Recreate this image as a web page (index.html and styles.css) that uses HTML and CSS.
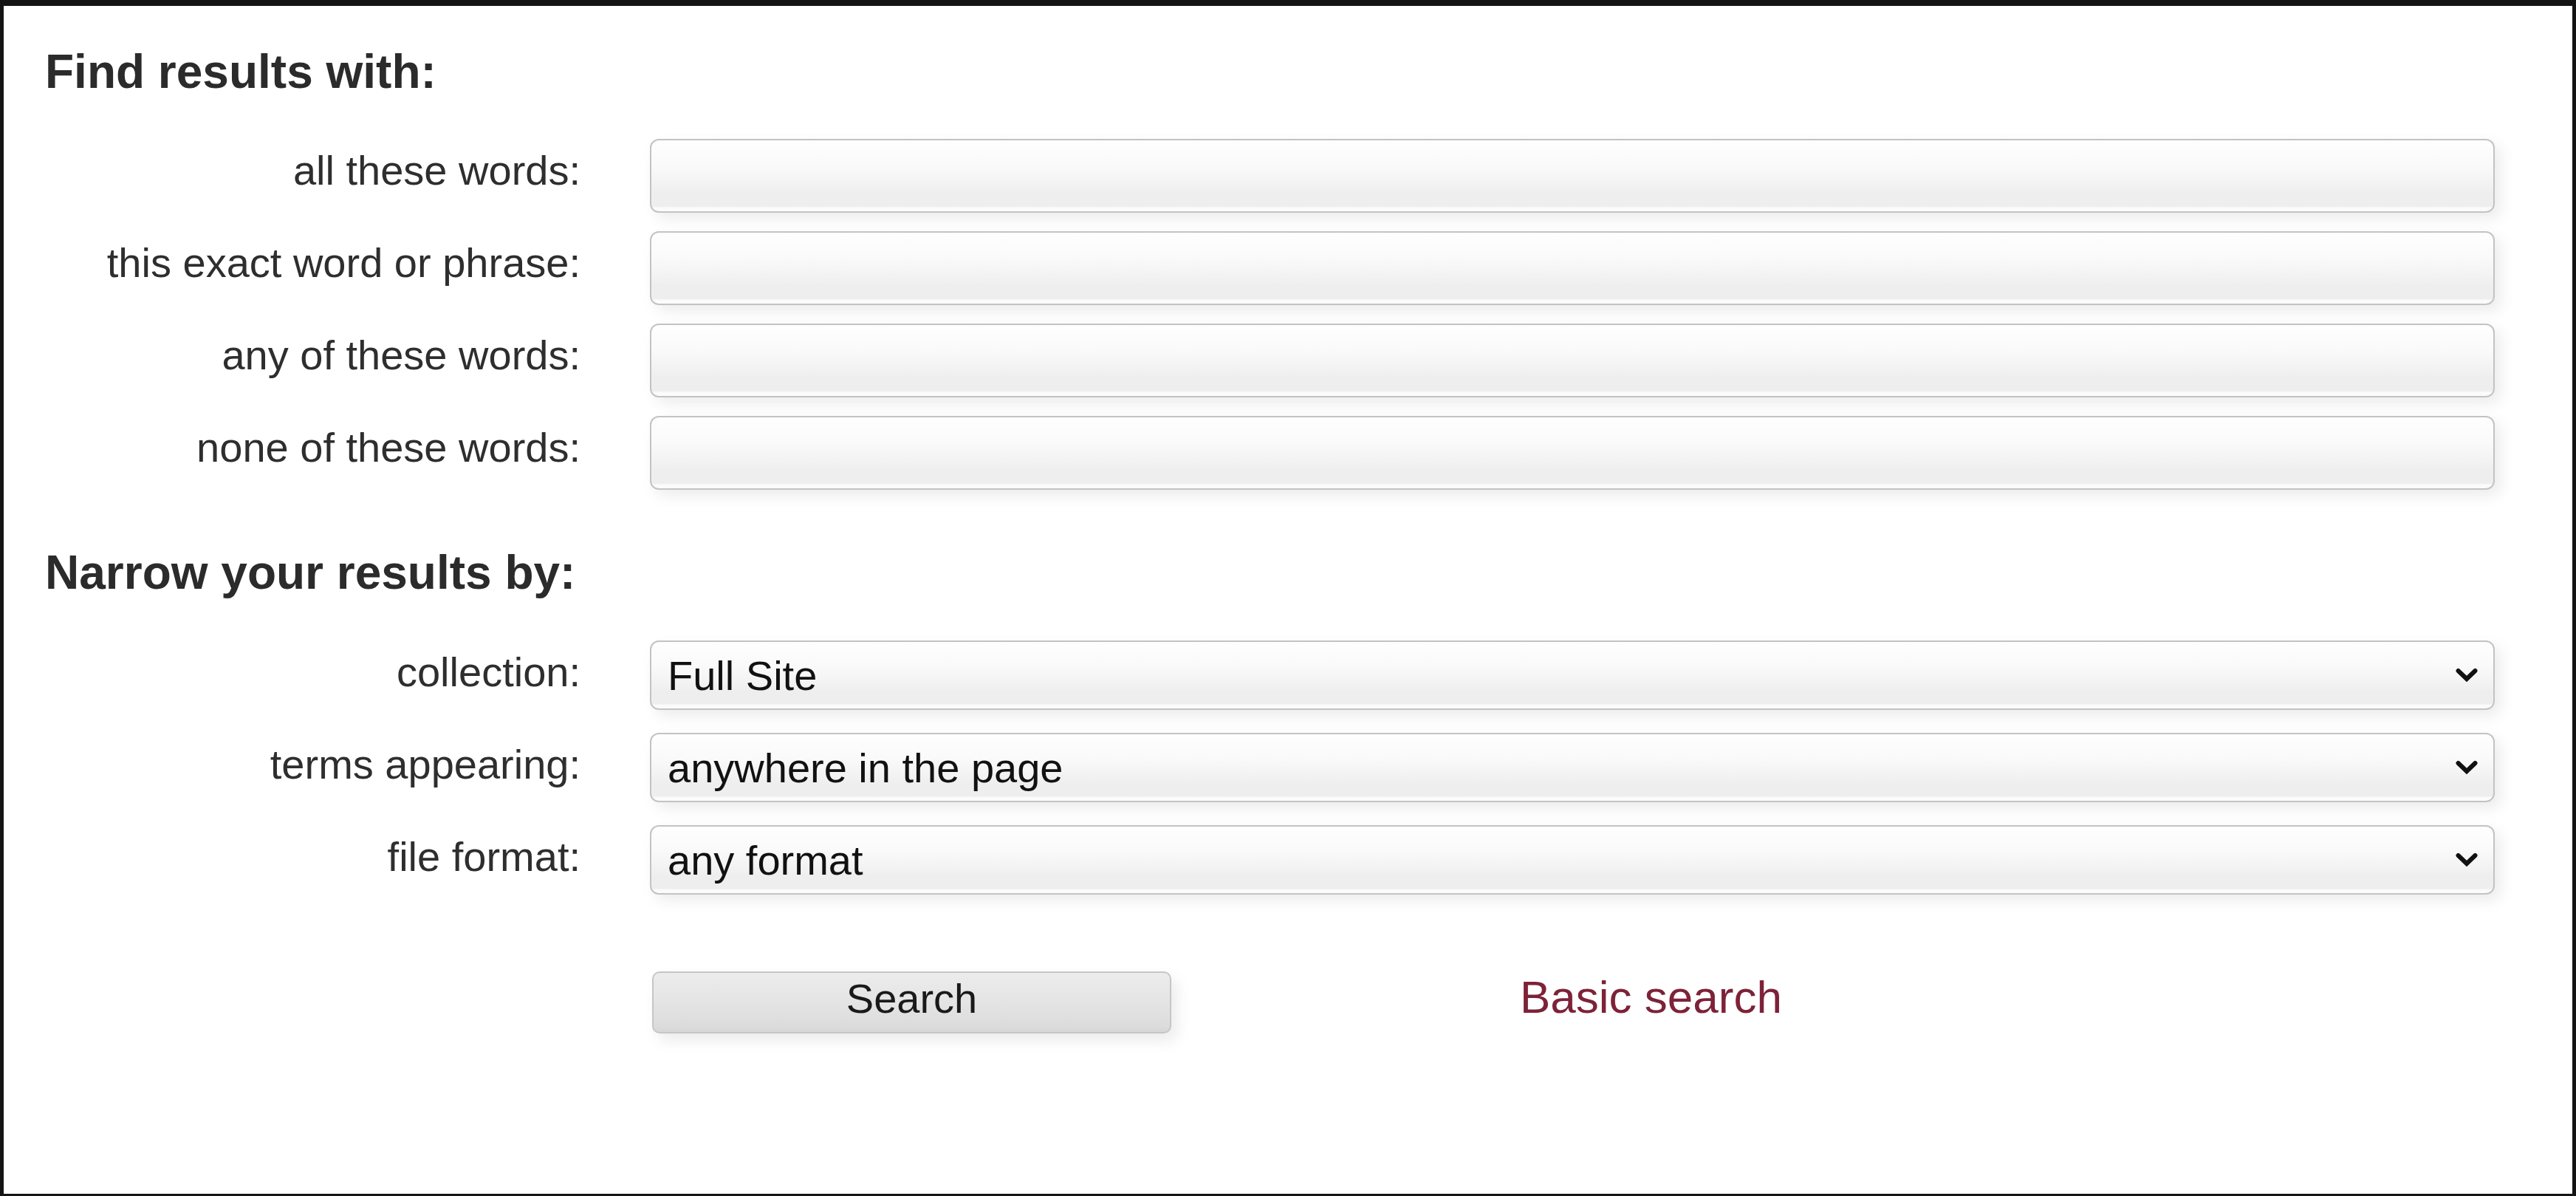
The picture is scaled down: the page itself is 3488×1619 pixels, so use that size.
FILE: index.html
```html
<!DOCTYPE html>
<html lang="en">
<head>
<meta charset="utf-8">
<title>Advanced search</title>
<link rel="stylesheet" href="styles.css">
</head>
<body>
<main class="frame">
  <form class="search-form">
    <h2 class="section-title">Find results with:</h2>
    <div class="fields text-fields">
      <label class="field-label" for="f1">all these words:</label>
      <input class="text-field" id="f1" type="text">
      <label class="field-label" for="f2">this exact word or phrase:</label>
      <input class="text-field" id="f2" type="text">
      <label class="field-label" for="f3">any of these words:</label>
      <input class="text-field" id="f3" type="text">
      <label class="field-label" for="f4">none of these words:</label>
      <input class="text-field" id="f4" type="text">
    </div>

    <h2 class="section-title narrow-title">Narrow your results by:</h2>
    <div class="fields select-fields">
      <label class="field-label" for="s1">collection:</label>
      <div class="select-wrap">
        <select class="select-field" id="s1"><option>Full Site</option></select>
        <svg class="chevron" viewBox="0 0 30 19" aria-hidden="true"><polyline points="3.5,3.5 15,14.5 26.5,3.5"/></svg>
      </div>
      <label class="field-label" for="s2">terms appearing:</label>
      <div class="select-wrap">
        <select class="select-field" id="s2"><option>anywhere in the page</option></select>
        <svg class="chevron" viewBox="0 0 30 19" aria-hidden="true"><polyline points="3.5,3.5 15,14.5 26.5,3.5"/></svg>
      </div>
      <label class="field-label" for="s3">file format:</label>
      <div class="select-wrap">
        <select class="select-field" id="s3"><option>any format</option></select>
        <svg class="chevron" viewBox="0 0 30 19" aria-hidden="true"><polyline points="3.5,3.5 15,14.5 26.5,3.5"/></svg>
      </div>
    </div>

    <div class="actions">
      <button class="search-button" type="button">Search</button>
      <a class="basic-link" href="#">Basic search</a>
    </div>
  </form>
</main>
</body>
</html>
```

FILE: styles.css
```css
html, body {
  margin: 0;
  padding: 0;
}

body {
  background: #141414;
  width: 3488px;
  height: 1619px;
  overflow: hidden;
  font-family: "Liberation Sans", Arial, sans-serif;
}

.frame {
  box-sizing: border-box;
  width: 3478px;
  height: 1608px;
  margin: 8px 5px 3px 5px;
  background: #ffffff;
  padding: 52px 0 0 56px;
}

.search-form {
  margin: 0;
}

.section-title {
  margin: 0;
  font-size: 64px;
  line-height: 74px;
  font-weight: bold;
  color: #2b2b2b;
}

.fields {
  display: grid;
  grid-template-columns: 725px 2498px;
  column-gap: 94px;
  margin-top: 54px;
}

.text-fields {
  row-gap: 25px;
}

.narrow-title {
  margin-top: 75px;
}

.select-fields {
  margin-top: 55px;
  row-gap: 31px;
}

.field-label {
  text-align: right;
  font-size: 56px;
  line-height: 64px;
  padding-top: 11px;
  color: #2e2e2e;
}

.text-field {
  box-sizing: border-box;
  height: 100px;
  width: 100%;
  margin: 0;
  border: 2px solid #c3c3c3;
  border-radius: 12px;
  background: linear-gradient(to bottom, #fefefe 0%, #fafafa 35%, #f3f3f3 60%, #eeeeee 75%, #eeeeee 93%, #fbfbfb 95%, #fbfbfb 100%);
  box-shadow: 8px 8px 20px rgba(0, 0, 0, 0.08);
  font-family: "Liberation Sans", Arial, sans-serif;
  font-size: 56px;
  padding: 0 22px;
  outline: none;
}

.select-wrap {
  position: relative;
  height: 94px;
}

.select-field {
  box-sizing: border-box;
  -webkit-appearance: none;
  appearance: none;
  width: 100%;
  height: 94px;
  margin: 0;
  border: 2px solid #c3c3c3;
  border-radius: 12px;
  background: linear-gradient(to bottom, #fefefe 0%, #fafafa 35%, #f3f3f3 60%, #eeeeee 75%, #eeeeee 93%, #fbfbfb 95%, #fbfbfb 100%);
  box-shadow: 8px 8px 20px rgba(0, 0, 0, 0.08);
  font-family: "Liberation Sans", Arial, sans-serif;
  font-size: 56px;
  color: #111111;
  padding: 0 80px 0 22px;
  outline: none;
}

.chevron {
  position: absolute;
  right: 23px;
  top: 50%;
  width: 30px;
  height: 19px;
  transform: translateY(-50%);
  pointer-events: none;
  fill: none;
  stroke: #111111;
  stroke-width: 6;
  stroke-linecap: round;
  stroke-linejoin: miter;
}

.actions {
  display: flex;
  align-items: baseline;
  margin-top: 103px;
  margin-left: 822px;
}

.search-button {
  box-sizing: border-box;
  width: 703px;
  height: 84px;
  margin: 0;
  border: 2px solid #c6c6c6;
  border-radius: 10px;
  background: linear-gradient(to bottom, #ececec 0%, #e6e6e6 40%, #dcdcdc 90%, #d6d6d6 100%);
  box-shadow: 8px 10px 20px rgba(0, 0, 0, 0.08);
  font-family: "Liberation Sans", Arial, sans-serif;
  font-size: 56px;
  color: #1a1a1a;
  padding: 0 0 10px 0;
}

.basic-link {
  margin-left: 472px;
  font-size: 62px;
  color: #7d2238;
  text-decoration: none;
}
```
